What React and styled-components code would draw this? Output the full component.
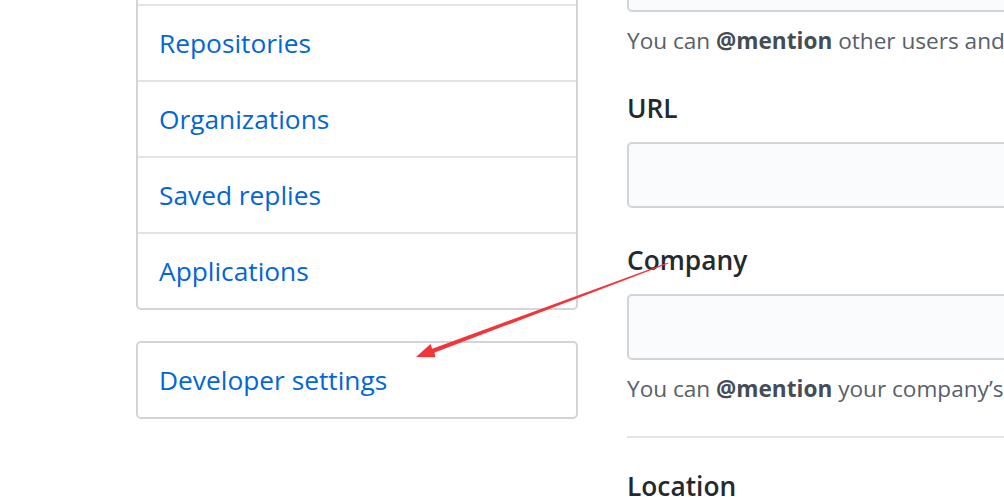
import React from "react";
import styled, { createGlobalStyle } from "styled-components";

const GlobalStyle = createGlobalStyle`
  html, body {
    margin: 0;
    padding: 0;
    background: #fff;
    font-family: "Open Sans", "Noto Sans", sans-serif;
  }
`;

const Page = styled.div`
  position: relative;
  height: 497px;
  overflow: hidden;
  display: flex;
  align-items: flex-start;
  gap: 49px;
  padding-left: 136px;
`;

const Sidebar = styled.nav`
  width: 442px;
  flex-shrink: 0;
  display: flex;
  flex-direction: column;
  gap: 31px;
  margin-top: -72px;
`;

const Menu = styled.div`
  border: 2px solid #d1d5da;
  border-radius: 5px;
  display: flex;
  flex-direction: column;
`;

const MenuItem = styled.a`
  display: flex;
  align-items: center;
  height: 74px;
  padding-left: 21px;
  font-size: 26.3px;
  color: #0366d6;
  text-decoration: none;
  border-bottom: ${(p) => (p.last ? "none" : "2px solid #e1e4e8")};
`;

const Form = styled.div`
  flex: 1;
  min-width: 500px;
  display: flex;
  flex-direction: column;
  margin-top: -54px;
`;

const Group = styled.div`
  display: flex;
  flex-direction: column;
  margin-bottom: 34px;
`;

const Label = styled.label`
  font-size: 26.3px;
  font-weight: 600;
  color: #24292e;
  line-height: 36px;
  margin-bottom: 16px;
`;

const Input = styled.div`
  height: 62px;
  background: #fafbfc;
  border: 2px solid #d1d5da;
  border-radius: 5px;
`;

const Note = styled.p`
  margin: 14px 0 0;
  font-size: 22.6px;
  line-height: 30px;
  color: #586069;
  white-space: nowrap;

  strong {
    font-weight: 700;
    color: #444d56;
  }
`;

const Divider = styled.hr`
  border: none;
  border-top: 2px solid #e1e4e8;
  margin: -2px 0 30px;
`;

const Arrow = styled.svg`
  position: absolute;
  left: 0;
  top: 0;
  pointer-events: none;
`;

export default function App() {
  return (
    <>
      <GlobalStyle />
      <Page>
        <Sidebar>
          <Menu>
            <MenuItem href="#">Blocked users</MenuItem>
            <MenuItem href="#">Repositories</MenuItem>
            <MenuItem href="#">Organizations</MenuItem>
            <MenuItem href="#">Saved replies</MenuItem>
            <MenuItem href="#" last>
              Applications
            </MenuItem>
          </Menu>
          <Menu>
            <MenuItem href="#" last>
              Developer settings
            </MenuItem>
          </Menu>
        </Sidebar>
        <Form>
          <Group>
            <Input />
            <Note>
              You can <strong>@mention</strong> other users and organizations
              to link to them.
            </Note>
          </Group>
          <Group>
            <Label>URL</Label>
            <Input />
          </Group>
          <Group>
            <Label>Company</Label>
            <Input />
            <Note>
              You can <strong>@mention</strong> your company’s GitHub
              organization to link it.
            </Note>
          </Group>
          <Divider />
          <Group>
            <Label>Location</Label>
            <Input />
          </Group>
        </Form>
        <Arrow width="1004" height="497" viewBox="0 0 1004 497">
          <polygon
            points="668,262.5 668.4,263.5 434.6,352.6 435.3,357.3 416,357 430.5,344.1 432.2,348.8"
            fill="#f2353a"
          />
        </Arrow>
      </Page>
    </>
  );
}
